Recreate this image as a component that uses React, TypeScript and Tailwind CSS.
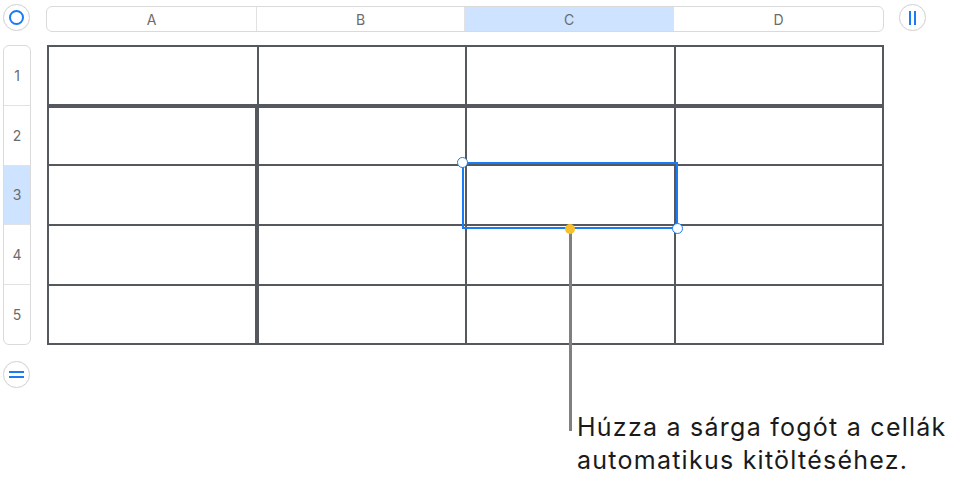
const cols = ["A", "B", "C", "D"];
const rows = [1, 2, 3, 4, 5];
const colW = ["w-[210px]", "w-[208px]", "w-[209px]", "flex-1"];
const rowH = ["h-[61px]", "h-[58px]", "h-[60px]", "h-[60px]", "h-[57px]"];

function RoundButton({ children }: { children: React.ReactNode }) {
  return (
    <div className="flex h-[27px] w-[27px] items-center justify-center rounded-full border border-[#d4d4d4] bg-white shadow-[0_0_1px_rgba(0,0,0,0.08)]">
      {children}
    </div>
  );
}

function GridCell({ r, c }: { r: number; c: number }) {
  const borders = [
    c < 3 ? (c === 0 && r > 0 ? "border-r-[4px]" : "border-r-2") : "",
    r < 4 ? (r === 0 ? "border-b-[4px]" : "border-b-2") : "",
  ].join(" ");
  return <div className={`${colW[c]} h-full border-[#55595d] ${borders}`} />;
}

export default function App() {
  return (
    <div className="relative h-[492px] w-[960px] overflow-hidden bg-white font-['Inter','Liberation_Sans',sans-serif]">
      {/* column header strip */}
      <div className="flex items-start pl-[3px] pt-[4px]">
        <RoundButton>
          <div className="h-[15px] w-[15px] rounded-full border-2 border-[#1a7cf5]" />
        </RoundButton>
        <div className="ml-[16px] mt-[2px] flex h-[26px] w-[838px] overflow-hidden rounded-[6px] border border-[#dadada]">
          {cols.map((c, i) => (
            <div
              key={c}
              className={`${colW[i]} flex items-center justify-center text-[14px] text-[#6b6b6b] ${i < 3 ? "border-r border-[#e2e2e2]" : ""} ${c === "C" ? "bg-[#cde3ff]" : ""}`}
            >
              {c}
            </div>
          ))}
        </div>
        <div className="ml-[15px]">
          <RoundButton>
            <div className="flex gap-[3px]">
              <div className="h-[14px] w-[2px] bg-[#1a7cf5]" />
              <div className="h-[14px] w-[2px] bg-[#1a7cf5]" />
            </div>
          </RoundButton>
        </div>
      </div>

      {/* row headers + table */}
      <div className="mt-[13px] flex pl-[3px]">
        <div className="flex h-[300px] w-[28px] flex-col overflow-hidden rounded-[6px] border border-[#dadada]">
          {rows.map((n) => (
            <div
              key={n}
              className={`flex flex-1 items-center justify-center text-[14px] text-[#6b6b6b] ${n < 5 ? "border-b border-[#e2e2e2]" : ""} ${n === 3 ? "bg-[#cde3ff]" : ""}`}
            >
              {n}
            </div>
          ))}
        </div>
        <div className="ml-[16px] flex h-[300px] w-[837px] flex-col border-2 border-[#55595d]">
          {rows.map((_, r) => (
            <div key={r} className={`flex ${rowH[r]}`}>
              {cols.map((_, c) => (
                <GridCell key={c} r={r} c={c} />
              ))}
            </div>
          ))}
        </div>
      </div>

      <div className="mt-[16px] pl-[3px]">
        <RoundButton>
          <div className="flex flex-col gap-[3px]">
            <div className="h-[2px] w-[15px] bg-[#1a7cf5]" />
            <div className="h-[2px] w-[15px] bg-[#1a7cf5]" />
          </div>
        </RoundButton>
      </div>

      {/* selection */}
      <div className="absolute left-[462px] top-[162px] h-[67px] w-[216px] border-2 border-[#1a7cf5]" />
      <div className="absolute left-[457px] top-[157px] h-[11px] w-[11px] rounded-full border-[1.5px] border-[#1a7cf5] bg-white" />
      <div className="absolute left-[672px] top-[223px] h-[11px] w-[11px] rounded-full border-[1.5px] border-[#1a7cf5] bg-white" />

      {/* autofill callout */}
      <div className="absolute left-[569px] top-[230px] h-[201px] w-[3px] bg-[#808080]" />
      <div className="absolute left-[565px] top-[224px] h-[10px] w-[10px] rounded-full bg-[#f6c02c]" />
      <p className="absolute left-[577px] top-[411px] text-[25px] leading-[33px] tracking-[0.05em] text-[#1a1a1a]">
        Húzza a sárga fogót a cellák
        <br />
        automatikus kitöltéséhez.
      </p>
    </div>
  );
}
